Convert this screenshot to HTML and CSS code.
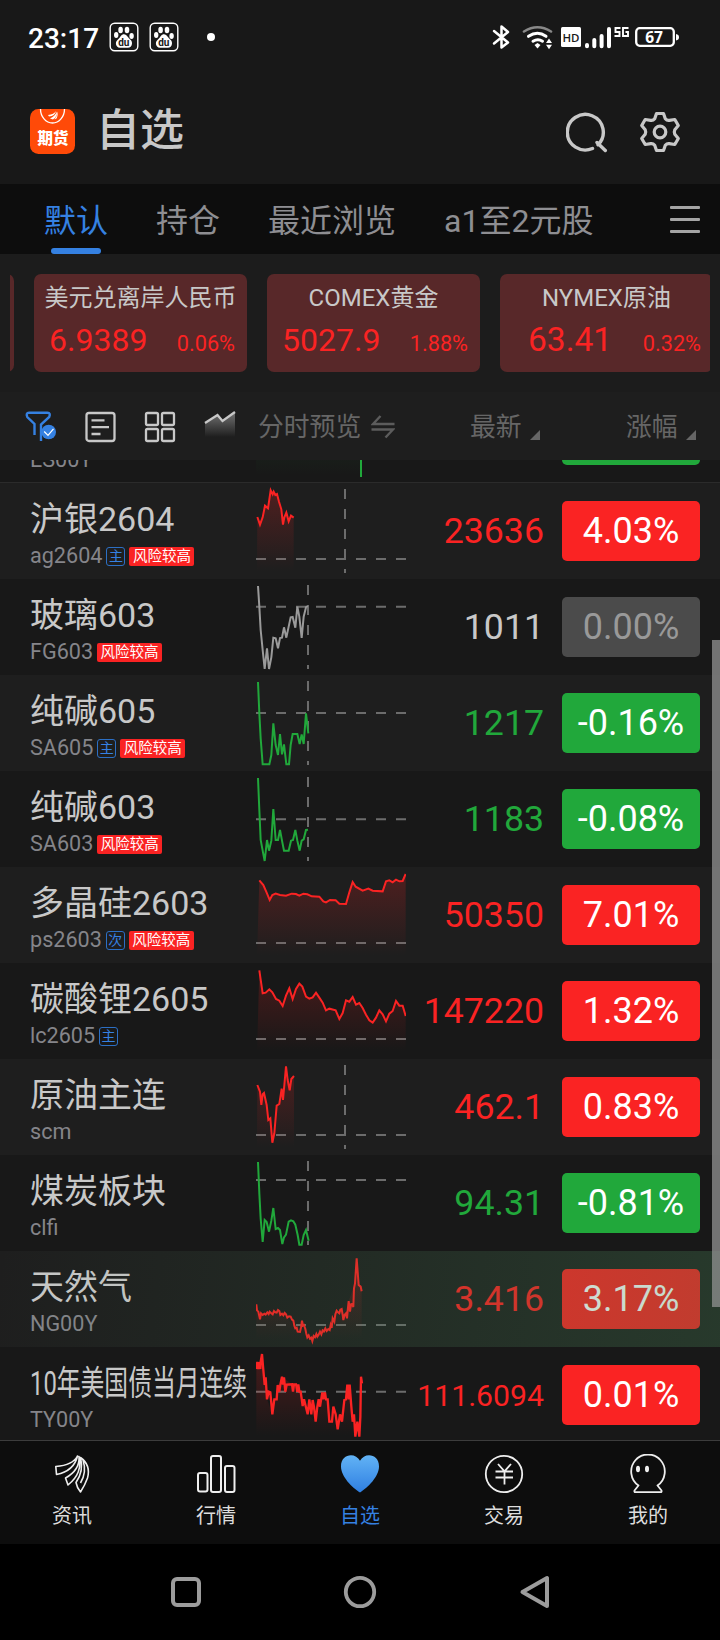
FILE: index.html
```html
<!DOCTYPE html>
<html lang="zh-CN">
<head>
    <meta charset="UTF-8">
    <meta name="viewport" content="width=device-width, initial-scale=1.0">
    <title>自选</title>
    <link rel="stylesheet" href="styles.css">
</head>
<body>
    <!-- shared shapes -->
    <svg class="defs" width="0" height="0">
        <defs>
            <linearGradient id="redFill" x1="0" y1="0" x2="0" y2="288" gradientUnits="userSpaceOnUse">
                <stop offset="0" stop-color="#fa2323" stop-opacity="0.24"/>
                <stop offset="0.92" stop-color="#fa2323" stop-opacity="0"/>
            </linearGradient>
            <linearGradient id="greenFill" x1="0" y1="0" x2="0" y2="288" gradientUnits="userSpaceOnUse">
                <stop offset="0" stop-color="#21a83b" stop-opacity="0.2"/>
                <stop offset="0.92" stop-color="#21a83b" stop-opacity="0"/>
            </linearGradient>
            <linearGradient id="heartFill" x1="0" y1="0" x2="0" y2="1">
                <stop offset="0" stop-color="#62b3f5"/>
                <stop offset="1" stop-color="#2f7fe2"/>
            </linearGradient>
            <linearGradient id="trendFill" x1="0" y1="0" x2="0" y2="1">
                <stop offset="0" stop-color="#c8c8c8" stop-opacity="0.5"/>
                <stop offset="1" stop-color="#c8c8c8" stop-opacity="0"/>
            </linearGradient>
            <symbol id="paw" viewBox="0 0 30 30">
                <rect x="1.2" y="1.2" width="27.6" height="27.6" rx="4.5" fill="none" stroke="#fff" stroke-width="1.4"/>
                <ellipse cx="11.6" cy="8" rx="2.3" ry="3.3" fill="#fff"/>
                <ellipse cx="18" cy="8" rx="2.3" ry="3.3" fill="#fff"/>
                <ellipse cx="7.2" cy="13" rx="2.2" ry="3" fill="#fff"/>
                <ellipse cx="22.6" cy="14" rx="2.2" ry="3" fill="#fff"/>
                <path d="M15 12.2c2.6 0 3.4 2.4 5 4.1 1.7 1.7 3.3 2.8 3 5.4-.3 2.6-2.1 4.2-4.6 4H11.4c-2.6.2-4.3-1.4-4.5-3.9-.2-2.7 1.6-3.7 3.2-5.5 1.5-1.7 2.3-4.1 4.9-4.1z" fill="#fff"/>
                <text x="14.8" y="23.6" text-anchor="middle" class="paw-text">du</text>
            </symbol>
        </defs>
    </svg>

    <div class="status-bar">
        <div class="status-left">
            <span class="time">23:17</span>
            <svg class="paw" width="30" height="30"><use href="#paw"/></svg>
            <svg class="paw" width="30" height="30"><use href="#paw"/></svg>
            <span class="dot"></span>
        </div>
        <svg class="status-icons" width="190" height="30" viewBox="490 22 190 30">
            <path d="M494 31l14 11.5-6.5 5V26.5l6.5 5.5-14 11.5" fill="none" stroke="#fff" stroke-width="2.5" stroke-linejoin="round" stroke-linecap="round"/>
            <path d="M524 31.5q13.5-8.5 27 0" fill="none" stroke="#888" stroke-width="2.6" stroke-linecap="round"/>
            <path d="M528.5 36.3q9-6 17.5 0M533 41.2q5-3 9.5 0" fill="none" stroke="#fff" stroke-width="3" stroke-linecap="round"/>
            <path d="M534.5 45l3-2 3 2-3 3.5z" fill="#fff"/>
            <path d="M546 43l3-4.5 3 4.5zM546 44.8h6l-3 4.5z" fill="#fff"/>
            <rect x="561" y="27" width="20" height="20" rx="1.5" fill="#fff"/>
            <text x="571" y="41.5" text-anchor="middle" class="hd">HD</text>
            <path d="M587 45v1.2M594.3 40v6.2M601.6 36v10.2M609 29v17.2" stroke="#fff" stroke-width="4" stroke-linecap="round"/>
            <path d="M620.5 28h-5v4h4v4h-5M628.5 28h-5.5v8h5v-4h-2.5" fill="none" stroke="#fff" stroke-width="1.9"/>
            <rect x="636.2" y="28.2" width="37.6" height="17.6" rx="3.5" fill="none" stroke="#fff" stroke-width="2.3"/>
            <path d="M676 34q3 .5 3 3.2t-3 3.2z" fill="#fff"/>
            <text x="654" y="42.8" text-anchor="middle" class="battery">67</text>
        </svg>
    </div>

    <header class="header">
        <svg class="logo" width="45" height="45" viewBox="0 0 45 45">
            <rect width="45" height="45" rx="8.5" fill="#ff4a08"/>
            <path d="M10.5 0a12 14 0 0 0 24 0" fill="none" stroke="#fff" stroke-width="1.3"/>
            <path d="M18 6q6-.5 8-4-1 5-7 5.500zM20 9.500q6-3 6.500-7 1 5-3.500 8zM24.500 10.500q3-4 2.500-8 1.500 3-.5 7z" fill="#fff"/>
            <text x="23" y="34.5" text-anchor="middle" class="logo-text">期货</text>
        </svg>
        <h1>自选</h1>
        <div class="header-actions">
            <svg width="42" height="42" viewBox="0 0 42 42" fill="none" stroke="#c8c8c8" stroke-width="3.4" stroke-linecap="round">
                <path d="M26.5 37.5a18 17.8 0 1 1 5.5-3.7M31 31.5l8.300 8"/>
            </svg>
            <svg width="42" height="42" viewBox="0 0 42 42" fill="none" stroke="#c8c8c8" stroke-width="3.2" stroke-linejoin="round">
                <path d="M17.5 2.5h7l1.8 5.3q1.7 2 4 1.6l5.5-.9 3.500 6-3.500 4.200q-1 2.300 0 4.600l3.500 4.200-3.500 6-5.500-.9q-2.300-.4-4 1.600l-1.800 5.300h-7l-1.800-5.300q-1.700-2-4-1.600l-5.500.9-3.500-6 3.500-4.200q1-2.300 0-4.600l-3.500-4.200 3.500-6 5.500.9q2.300.4 4-1.600z"/>
                <circle cx="21" cy="21" r="5.800"/>
            </svg>
        </div>
    </header>

    <nav class="tabs">
        <span class="tab active">默认</span>
        <span class="tab">持仓</span>
        <span class="tab">最近浏览</span>
        <span class="tab">a1至2元股</span>
        <div class="menu"><i></i><i></i><i></i></div>
    </nav>

    <section class="cards">
        <div class="card-strip">
            <div class="card"></div>
            <div class="card">
                <div class="card-title">美元兑离岸人民币</div>
                <div class="card-values"><b>6.9389</b><span>0.06%</span></div>
            </div>
            <div class="card">
                <div class="card-title">COMEX黄金</div>
                <div class="card-values"><b>5027.9</b><span>1.88%</span></div>
            </div>
            <div class="card">
                <div class="card-title">NYMEX原油</div>
                <div class="card-values wide"><b>63.41</b><span>0.32%</span></div>
            </div>
        </div>
    </section>

    <div class="columns">
        <div class="tools">
            <svg width="32" height="32" viewBox="0 0 32 32" fill="none">
                <path d="M10.5 24v-11L3.3 6Q1.5 1.8 5 1.8h18.5q3.5 0 1.7 4.2L17 13.5V30" stroke="#3581e2" stroke-width="2.4"/>
                <circle cx="24.7" cy="21" r="7.3" fill="#3581e2"/>
                <path d="M20.2 20.5l3.8 3.8 5.5-6.5" stroke="#fff" stroke-width="1.2"/>
            </svg>
            <svg width="32" height="32" viewBox="0 0 32 32" fill="none" stroke="#c8c8c8" stroke-width="2.3">
                <rect x="2.5" y="2" width="28" height="28" rx="2.5"/>
                <path d="M7.5 9.3h13M7.5 16.2h17.5M7.5 23h9"/>
            </svg>
            <svg width="32" height="32" viewBox="0 0 32 32" fill="none" stroke="#c8c8c8" stroke-width="2.3">
                <rect x="2" y="2" width="12" height="12" rx="1.5"/>
                <rect x="18" y="2" width="12" height="12" rx="1.5"/>
                <rect x="2" y="18" width="12" height="12" rx="1.5"/>
                <rect x="18" y="18" width="12" height="12" rx="1.5"/>
            </svg>
            <svg width="32" height="32" viewBox="0 0 32 32" fill="none">
                <path d="M1 12L13.5 4l5 6L31 1v25H1z" fill="url(#trendFill)"/>
                <path d="M1 12L13.5 4l5 6L31 1" stroke="#c8c8c8" stroke-width="2.3"/>
            </svg>
        </div>
        <div class="col-preview">
            分时预览
            <svg width="24" height="24" viewBox="0 0 24 24" fill="none" stroke="#5c5c5c" stroke-width="2.4">
                <path d="M9.5 1L2 9h21.5M.5 14.5H22L14.5 22.5"/>
            </svg>
        </div>
        <div class="col-price">最新<i class="sort"></i></div>
        <div class="col-change">涨幅<i class="sort"></i></div>
    </div>

    <main class="list">
        <div class="row first">
            <div class="info">
                <div class="name">&nbsp;</div>
                <div class="code">ES00Y</div>
            </div>
            <svg class="chart" viewBox="0 0 450 288">
                <path d="M0 80H315V270H0z" fill="url(#greenFill)"/>
                <path class="line down" d="M315 160V270"/>
            </svg>
            <div class="price"></div>
            <div class="change down"></div>
        </div>

        <div class="row">
            <div class="info">
                <div class="name">沪银2604</div>
                <div class="code">ag2604<span class="tag">主</span><span class="risk">风险较高</span></div>
            </div>
            <svg class="chart" viewBox="0 0 450 288">
                <path class="dash" d="M267 18V270M0 228H450"/>
                <path d="M4 102L12 125 20 103 27 68 36 76 44 22 50 34 53 26 58 36 63 33 69 56 76 79 81 125 85 103 91 89 98 115 105 98 113 104V270H3z" fill="url(#redFill)"/>
                <polyline class="line up" points="4,102 12,125 20,103 27,68 36,76 44,22 50,34 53,26 58,36 63,33 69,56 76,79 81,125 85,103 91,89 98,115 105,98 113,104"/>
            </svg>
            <div class="price up">23636</div>
            <div class="change up">4.03%</div>
        </div>

        <div class="row">
            <div class="info">
                <div class="name">玻璃603</div>
                <div class="code">FG603<span class="risk">风险较高</span></div>
            </div>
            <svg class="chart" viewBox="0 0 450 288">
                <path class="dash" d="M156 18V270M0 83H450"/>
                <polyline class="line flat" points="6,21 10,83 14,153 20,213 26,270 33,208 39,270 46,235 52,176 59,178 66,208 72,177 78,176 84,145 91,176 98,143 104,115 110,114 118,146 124,83 130,113 137,177 143,113 150,85 155,81"/>
            </svg>
            <div class="price">1011</div>
            <div class="change flat">0.00%</div>
        </div>

        <div class="row">
            <div class="info">
                <div class="name">纯碱605</div>
                <div class="code">SA605<span class="tag">主</span><span class="risk">风险较高</span></div>
            </div>
            <svg class="chart" viewBox="0 0 450 288">
                <path class="dash" d="M156 18V270M0 114H450"/>
                <polyline class="line down" points="6,21 10,115 14,190 20,268 40,268 46,240 52,145 59,210 66,240 72,177 78,238 84,208 91,268 99,268 104,210 110,177 124,177 131,207 137,178 143,207 150,115 157,175"/>
            </svg>
            <div class="price down">1217</div>
            <div class="change down">-0.16%</div>
        </div>

        <div class="row">
            <div class="info">
                <div class="name">纯碱603</div>
                <div class="code">SA603<span class="risk">风险较高</span></div>
            </div>
            <svg class="chart" viewBox="0 0 450 288">
                <path class="dash" d="M156 18V270M0 145H450"/>
                <polyline class="line down" points="6,21 10,117 14,207 20,239 26,270 33,207 39,239 46,209 52,114 59,207 66,207 72,177 78,209 84,239 98,239 105,209 111,207 118,177 124,209 131,239 137,209 143,205 150,177 156,176"/>
            </svg>
            <div class="price down">1183</div>
            <div class="change down">-0.08%</div>
        </div>

        <div class="row">
            <div class="info">
                <div class="name">多晶硅2603</div>
                <div class="code">ps2603<span class="tag">次</span><span class="risk">风险较高</span></div>
            </div>
            <svg class="chart" viewBox="0 0 450 288">
                <path class="dash" d="M0 228H450"/>
                <path d="M10 40L22 54 32 77 41 99 49 84 59 80 72 84 90 86 107 80 120 81 130 86 142 80 154 82 167 88 190 89 202 103 210 106 222 99 239 100 250 110 270 111 280 76 290 45 299 59 320 71 337 65 350 71 380 73 390 43 400 40 410 46 420 38 430 43 440 42 449 21V270H3z" fill="url(#redFill)"/>
                <polyline class="line up" points="10,40 22,54 32,77 41,99 49,84 59,80 72,84 90,86 107,80 120,81 130,86 142,80 154,82 167,88 190,89 202,103 210,106 222,99 239,100 250,110 270,111 280,76 290,45 299,59 320,71 337,65 350,71 380,73 390,43 400,40 410,46 420,38 430,43 440,42 449,21"/>
            </svg>
            <div class="price up">50350</div>
            <div class="change up">7.01%</div>
        </div>

        <div class="row">
            <div class="info">
                <div class="name">碳酸锂2605</div>
                <div class="code">lc2605<span class="tag">主</span></div>
            </div>
            <svg class="chart" viewBox="0 0 450 288">
                <path class="dash" d="M0 228H450"/>
                <path d="M10 22L20 91 29 89 40 79 49 88 60 108 70 113 80 129 90 98 100 76 110 108 120 78 130 62 139 71 150 101 160 107 170 103 180 89 190 104 200 119 210 142 220 137 239 142 250 168 260 150 270 112 280 116 290 102 300 125 310 120 320 135 330 155 340 172 350 179 360 164 370 142 380 154 390 175 400 152 410 144 420 114 430 128 440 128 449 159V270H3z" fill="url(#redFill)"/>
                <polyline class="line up" points="10,22 20,91 29,89 40,79 49,88 60,108 70,113 80,129 90,98 100,76 110,108 120,78 130,62 139,71 150,101 160,107 170,103 180,89 190,104 200,119 210,142 220,137 239,142 250,168 260,150 270,112 280,116 290,102 300,125 310,120 320,135 330,155 340,172 350,179 360,164 370,142 380,154 390,175 400,152 410,144 420,114 430,128 440,128 449,159"/>
            </svg>
            <div class="price up">147220</div>
            <div class="change up">1.32%</div>
        </div>

        <div class="row">
            <div class="info">
                <div class="name">原油主连</div>
                <div class="code">scm</div>
            </div>
            <svg class="chart" viewBox="0 0 450 288">
                <path class="dash" d="M267 18V270M0 228H450"/>
                <path d="M4 78L12 98 16 138 20 106 24 102 32 138 37 183 43 178 49 251 55 223 62 140 70 135 77 89 81 123 90 22 95 63 101 94 106 60 114 51V270H3z" fill="url(#redFill)"/>
                <polyline class="line up" points="4,78 12,98 16,138 20,106 24,102 32,138 37,183 43,178 49,251 55,223 62,140 70,135 77,89 81,123 90,22 95,63 101,94 106,60 114,51"/>
            </svg>
            <div class="price up">462.1</div>
            <div class="change up">0.83%</div>
        </div>

        <div class="row">
            <div class="info">
                <div class="name">煤炭板块</div>
                <div class="code">clfi</div>
            </div>
            <svg class="chart" viewBox="0 0 450 288">
                <path class="dash" d="M156 18V270M0 75H450"/>
                <polyline class="line down" points="6,21 10,115 14,190 20,261 26,195 32,201 39,230 46,197 52,159 59,222 66,219 72,225 79,267 84,247 90,239 98,200 105,196 112,199 118,209 125,240 130,269 137,269 143,240 150,225 158,257"/>
            </svg>
            <div class="price down">94.31</div>
            <div class="change down">-0.81%</div>
        </div>

        <div class="row flash">
            <div class="info">
                <div class="name">天然气</div>
                <div class="code">NG00Y</div>
            </div>
            <svg class="chart" viewBox="0 0 450 288">
                <path class="dash" d="M0 222H450"/>
                <path d="M1 160L12 205 15 187 68 178 94 200 118 232 138 209 154 259 169 270 198 247 224 222 242 179 262 207 278 150 297 97 302 22 308 102 317 121V270H1z" fill="url(#redFill)"/>
                <polyline class="line up" points="1,160 3,178 7,182 12,205 15,187 20,192 25,188 29,191 34,184 38,189 41,182 46,187 50,190 54,180 58,184 62,185 66,177 70,180 73,192 78,188 82,193 86,186 90,190 94,200 99,196 104,197 108,206 112,209 115,224 118,232 122,230 125,242 132,243 135,230 138,209 141,224 144,222 148,234 151,248 154,259 158,253 162,263 166,260 169,270 173,255 177,259 181,249 184,257 188,251 192,242 196,250 200,238 204,241 208,232 212,240 217,234 221,237 224,222 227,231 230,202 235,212 238,190 242,179 246,184 250,187 253,176 257,174 260,192 262,207 266,191 270,187 273,202 276,170 278,150 282,182 285,160 288,159 292,168 294,112 297,97 302,22 308,102 314,107 317,121"/>
            </svg>
            <div class="price up">3.416</div>
            <div class="change up">3.17%</div>
        </div>

        <div class="row">
            <div class="info">
                <div class="name long">10年美国债当月连续</div>
                <div class="code">TY00Y</div>
            </div>
            <svg class="chart" viewBox="0 0 450 288">
                <path class="dash" d="M0 134H450"/>
                <path d="M1 66L18 21 33 157 49 202 78 89 108 112 134 134 155 202 179 224 207 136 228 224 245 247 274 113 298 269 310 269 315 89 318 109V270H1z" fill="url(#redFill)"/>
                <polyline class="line up thick" points="1,66 4,45 8,66 10,45 13,66 14,45 18,21 22,69 26,114 29,91 33,157 38,134 43,136 49,202 55,157 62,157 65,114 70,134 73,113 78,89 81,113 84,91 88,134 92,113 108,112 111,134 114,112 120,112 124,134 127,112 130,134 134,134 140,177 144,157 149,177 155,202 160,157 166,202 170,159 174,180 179,224 184,179 188,157 192,179 199,136 202,157 207,136 210,157 215,157 220,224 228,224 232,179 239,202 245,247 252,202 258,224 265,159 270,157 274,113 278,157 281,113 286,179 290,224 294,202 298,269 304,224 310,269 313,209 315,89 318,109"/>
            </svg>
            <div class="price up small">111.6094</div>
            <div class="change up">0.01%</div>
        </div>
        <div class="scrollbar"></div>
    </main>

    <nav class="bottom-nav">
        <div class="nav-item">
            <svg width="40" height="40" viewBox="0 0 40 40" fill="none" stroke="#eee" stroke-width="1.6" stroke-linejoin="round">
                <path d="M25.5 2Q21 11 3.8 12.5L4.5 20.5Q22 17 25.5 2zM27 2.5Q28 16 13.5 24L16 31Q31 19 27 2.5zM28.5 3.5Q32 17 24 28.5Q25 34 28.5 38Q33 31 35.5 24Q39 11 28.5 3.5zM31 6Q35 18 28.5 29"/>
            </svg>
            <span>资讯</span>
        </div>
        <div class="nav-item">
            <svg width="40" height="40" viewBox="0 0 40 40" fill="none" stroke="#eee" stroke-width="2">
                <rect x="2" y="19" width="9.5" height="18.5" rx="2"/>
                <rect x="15" y="2" width="10" height="36" rx="2"/>
                <rect x="29" y="12" width="9.5" height="26" rx="2"/>
            </svg>
            <span>行情</span>
        </div>
        <div class="nav-item active">
            <svg width="40" height="40" viewBox="0 0 40 40">
                <path d="M20 38.5C12 33.5 1 22.5 1 12.5 1 -.5 15.5 -2 20 6.8 24.5 -2 39 -.5 39 12.5 39 22.5 28 33.5 20 38.5z" fill="url(#heartFill)"/>
            </svg>
            <span>自选</span>
        </div>
        <div class="nav-item">
            <svg width="40" height="40" viewBox="0 0 40 40" fill="none" stroke="#eee" stroke-width="1.8">
                <circle cx="20" cy="20" r="18.2"/>
                <path d="M14 10l6.5 7.3L27 10M11.5 17.5h17.5M11.5 23.5h17.5M20.5 17v13.5"/>
            </svg>
            <span>交易</span>
        </div>
        <div class="nav-item">
            <svg width="40" height="40" viewBox="0 0 40 40" fill="none" stroke="#eee" stroke-width="1.8" stroke-linejoin="round">
                <path d="M10.5 31.5A16.8 17 0 1 1 29.5 31.5L33.5 36.5Q34 38 32.5 38.2H7.5Q6 38 6.5 36.5z"/>
                <ellipse cx="10" cy="15" rx="2" ry="3.3" fill="#eee" stroke="none"/>
                <ellipse cx="19" cy="15" rx="2" ry="3.3" fill="#eee" stroke="none"/>
            </svg>
            <span>我的</span>
        </div>
    </nav>

    <div class="system-nav">
        <svg width="34" height="34" viewBox="0 0 34 34" fill="none" stroke="#9c9c9c" stroke-width="4"><rect x="4" y="4" width="26" height="26" rx="4"/></svg>
        <svg width="34" height="34" viewBox="0 0 34 34" fill="none" stroke="#9c9c9c" stroke-width="3.8"><circle cx="17" cy="17" r="14.2"/></svg>
        <svg width="34" height="34" viewBox="0 0 34 34" fill="none" stroke="#9c9c9c" stroke-width="4" stroke-linejoin="round"><path d="M5.5 17L30 3V31z"/></svg>
    </div>
</body>
</html>
```
FILE: styles.css
```css
* {
    margin: 0;
    padding: 0;
    box-sizing: border-box;
}

body {
    width: 720px;
    height: 1640px;
    display: flex;
    flex-direction: column;
    background: #000;
    color: #c8c8c8;
    font-family: Roboto, "Noto Sans CJK SC", sans-serif;
    overflow: hidden;
}

svg {
    display: block;
    flex-shrink: 0;
}

.defs {
    position: absolute;
}

/* status bar */
.status-bar {
    height: 76px;
    padding: 22px 38px 0 28px;
    display: flex;
    justify-content: space-between;
    background: #181818;
}

.status-left {
    height: 30px;
    display: flex;
    align-items: center;
}

.time {
    width: 81px;
    padding-top: 2px;
    font-size: 28px;
    font-weight: 500;
    color: #fff;
}

.paw {
    margin-right: 10px;
}

.paw-text {
    font: bold 10px Roboto, sans-serif;
    fill: #181818;
}

.dot {
    width: 8px;
    height: 8px;
    margin-left: 18px;
    border-radius: 50%;
    background: #fff;
}

.status-icons {
    margin-right: 2px;
}

.hd {
    font: 600 11.5px "Open Sans", sans-serif;
    fill: #181818;
}

.battery {
    font: bold 15.5px "Open Sans", sans-serif;
    fill: #fff;
}

/* header */
.header {
    height: 108px;
    padding: 0 39px 0 30px;
    display: flex;
    align-items: center;
    background: #181818;
}

.logo {
    margin-top: 3px;
}

.logo-text {
    font: 900 15.5px "Noto Sans CJK SC", sans-serif;
    fill: #fff;
}

h1 {
    margin: 2px 0 0 21px;
    font-size: 44px;
    line-height: 60px;
    font-weight: 500;
}

.header-actions {
    margin: 3px 0 0 auto;
    display: flex;
    gap: 31px;
}

/* group tabs */
.tabs {
    height: 70px;
    padding: 0 20px 0 44px;
    display: flex;
    gap: 48px;
    background: #0d0d0d;
}

.tab {
    font-size: 32px;
    line-height: 74px;
    height: 70px;
    color: #8e8e92;
    white-space: nowrap;
}

.tab.active {
    position: relative;
    color: #3581e2;
}

.tab.active::after {
    content: "";
    position: absolute;
    left: 7px;
    bottom: 0;
    width: 50px;
    height: 6px;
    border-radius: 3px;
    background: #3581e2;
}

.menu {
    width: 30px;
    margin-left: auto;
    padding-top: 22px;
    display: flex;
    flex-direction: column;
    gap: 9px;
}

.menu i {
    height: 3px;
    border-radius: 1px;
    background: #a4a4a4;
}

/* quote cards */
.cards {
    height: 138px;
    padding: 20px 10px;
    background: #1c1c1c;
}

.card-strip {
    height: 98px;
    display: flex;
    gap: 20px;
    overflow: hidden;
    border-radius: 0 2px 2px 0;
}

.card {
    flex: 0 0 213px;
    height: 98px;
    border-radius: 7px;
    background: #582829;
}

.card:first-child {
    margin-left: -209px;
}

.card-title {
    padding-top: 6px;
    font-size: 24px;
    line-height: 36px;
    text-align: center;
    white-space: nowrap;
}

.card-values {
    padding: 5px 12px 0 15px;
    display: flex;
    justify-content: space-between;
    align-items: baseline;
    color: #fa2323;
    line-height: 38px;
}

.card-values b {
    font-size: 32px;
    font-weight: 400;
}

.card-values span {
    font-size: 21.7px;
}

.card-values.wide {
    padding-left: 28px;
}

.card-values.wide b {
    font-size: 33.5px;
}

/* column heads */
.columns {
    height: 68px;
    padding-left: 24px;
    display: flex;
    align-items: center;
    background: #1e1e1e;
    color: #666;
    font-size: 25.8px;
    line-height: 38px;
}

.tools {
    flex: 0 0 234px;
    display: flex;
    gap: 28px;
    margin-top: 2px;
}

.col-preview {
    flex: 0 0 212px;
    display: flex;
    align-items: center;
    gap: 10px;
    margin-top: 2px;
}

.col-price,
.col-change {
    display: flex;
    align-items: center;
    width: 156px;
    flex-shrink: 0;
    margin-top: 2px;
}

.col-change {
    width: 80px;
}

.sort {
    margin: 15px 0 0 8px;
    border-left: 10px solid transparent;
    border-bottom: 10px solid #666;
}

/* quote list */
.list {
    position: relative;
    height: 980px;
    overflow: hidden;
    background: #181818;
}

.row {
    height: 96px;
    padding: 0 20px 0 30px;
    display: flex;
    align-items: center;
    background: #181818;
}

.row:nth-child(even) {
    background: #1e1e1e;
}

.row.first {
    margin-top: -73px;
    border-bottom: 1px solid #2b2b2b;
}

.info {
    width: 226px;
    padding-top: 6px;
}

.name {
    font-size: 34px;
    line-height: 42px;
    white-space: nowrap;
}

.name.long {
    width: 311px;
    transform: scaleX(0.7);
    transform-origin: left;
}

.code {
    height: 30px;
    padding-top: 2px;
    display: flex;
    align-items: center;
    gap: 4px;
    font-size: 21.6px;
    line-height: 28px;
    color: #85858a;
}

.tag,
.risk {
    height: 19px;
    border-radius: 3px;
    font-size: 14.5px;
    line-height: 19px;
    text-align: center;
}

.tag {
    width: 19px;
    border: 1px solid #2c6fc4;
    color: #3581e2;
    font-size: 14px;
    line-height: 17px;
}

.risk {
    width: 65px;
    border-radius: 2px;
    background: #fa2323;
    color: #fff;
}

.chart {
    width: 150px;
    height: 96px;
}

.line {
    fill: none;
    stroke-width: 6;
}

.line.thick {
    stroke-width: 7;
}

.line.up {
    stroke: #fa2323;
}

.line.down {
    stroke: #21a83b;
}

.line.flat {
    stroke: #9a9a9a;
}

.dash {
    stroke: #6c6c6c;
    stroke-width: 6;
    stroke-dasharray: 30 30;
}

.price {
    width: 138px;
    font-size: 35.7px;
    text-align: right;
}

.price.small {
    font-size: 30.2px;
}

.price.up {
    color: #fa2323;
}

.price.down {
    color: #21a83b;
}

.change {
    width: 138px;
    height: 60px;
    margin-left: 18px;
    border-radius: 5px;
    font-size: 36px;
    line-height: 60px;
    text-align: center;
    color: #fff;
}

.change.up {
    background: #fa2323;
}

.change.down {
    background: #21a83b;
}

.change.flat {
    background: #4b4b4b;
    color: #999;
}

.row.flash {
    position: relative;
}

.row.flash::after {
    content: "";
    position: absolute;
    inset: 0;
    background: linear-gradient(97deg, rgba(60, 118, 74, 0), rgba(60, 118, 74, 0.31));
}

.scrollbar {
    position: absolute;
    top: 180px;
    right: 0;
    width: 8px;
    height: 667px;
    background: rgba(145, 145, 145, 0.75);
}

/* bottom navigation */
.bottom-nav {
    height: 104px;
    padding-top: 13px;
    display: flex;
    border-top: 1px solid #3c3c3c;
    background: #0d0d0d;
}

.nav-item {
    flex: 1;
    display: flex;
    flex-direction: column;
    align-items: center;
    gap: 7px;
    font-size: 20px;
    line-height: 30px;
    color: #ddd;
}

.nav-item.active {
    color: #3581e2;
}

.system-nav {
    height: 96px;
    display: flex;
    justify-content: center;
    align-items: center;
    gap: 140px;
    background: #000;
}
```
